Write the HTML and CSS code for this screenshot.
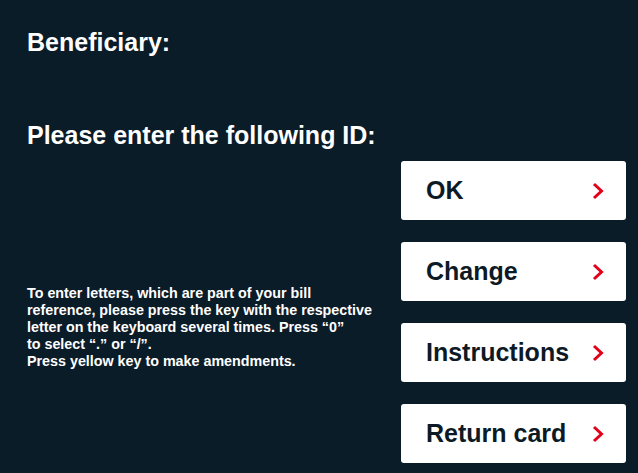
FILE: index.html
```html
<!DOCTYPE html>
<html lang="en">
<head>
<meta charset="utf-8">
<link rel="stylesheet" href="styles.css">
</head>
<body>
<div class="screen">
  <div class="info">
    <h1 class="title">Beneficiary:</h1>
    <h2 class="prompt">Please enter the following ID:</h2>
    <p class="hint">To enter letters, which are part of your bill<br>reference, please press the key with the respective<br>letter on the keyboard several times. Press “0”<br>to select “.” or “/”.<br>Press yellow key to make amendments.</p>
  </div>
  <div class="actions">
    <button class="btn"><span>OK</span><svg class="chev" viewBox="0 0 12 18"><path d="M2 2 L9.5 9 L2 16" /></svg></button>
    <button class="btn"><span>Change</span><svg class="chev" viewBox="0 0 12 18"><path d="M2 2 L9.5 9 L2 16" /></svg></button>
    <button class="btn"><span>Instructions</span><svg class="chev" viewBox="0 0 12 18"><path d="M2 2 L9.5 9 L2 16" /></svg></button>
    <button class="btn"><span>Return card</span><svg class="chev" viewBox="0 0 12 18"><path d="M2 2 L9.5 9 L2 16" /></svg></button>
  </div>
</div>
</body>
</html>
```
FILE: styles.css
```css
html, body {
  margin: 0;
  padding: 0;
  background: #0b1c29;
  height: 100%;
}
body {
  font-family: "Liberation Sans", Arial, sans-serif;
  color: #ffffff;
}
.screen {
  display: flex;
  justify-content: space-between;
  height: 473px;
  box-sizing: border-box;
  padding: 0 12px 0 27px;
}
.info {
  display: flex;
  flex-direction: column;
}
.title {
  margin: 0;
  padding-top: 28px;
  font-size: 25px;
  line-height: 28px;
  font-weight: 700;
}
.prompt {
  margin: 0;
  padding-top: 65px;
  font-size: 25px;
  line-height: 28px;
  font-weight: 700;
}
.hint {
  margin: 0;
  padding-top: 136px;
  font-size: 14.3px;
  line-height: 17px;
  font-weight: 700;
  white-space: nowrap;
}
.actions {
  display: flex;
  flex-direction: column;
  gap: 22px;
  padding-top: 161px;
  width: 225px;
}
.btn {
  display: flex;
  align-items: center;
  justify-content: space-between;
  height: 59px;
  border: none;
  border-radius: 3px;
  background: #ffffff;
  padding: 0 22px 0 25px;
  font-family: "Liberation Sans", Arial, sans-serif;
  font-size: 25px;
  font-weight: 700;
  color: #0d1a26;
  text-align: left;
}
.chev {
  width: 12px;
  height: 18px;
  fill: none;
  stroke: #e2001a;
  stroke-width: 3;
}
```
